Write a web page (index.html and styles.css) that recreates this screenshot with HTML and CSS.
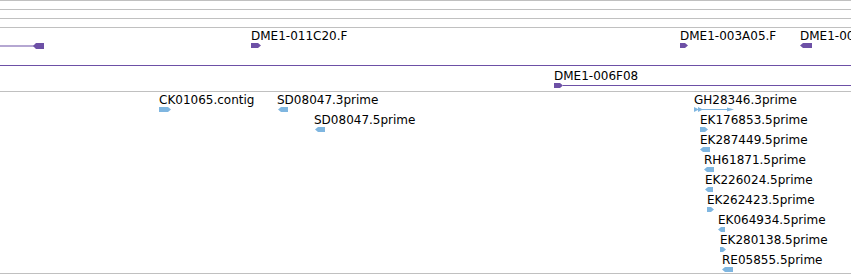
FILE: index.html
```html
<!DOCTYPE html>
<html>
<head>
<meta charset="utf-8">
<link rel="stylesheet" href="styles.css">
</head>
<body>
<div class="view">
  <div class="track thin"></div>
  <div class="track thin"></div>
  <div class="track thin"></div>
  <div class="track purple t2">
    <div class="row">
      <div class="feat" style="left:0px">
        <span class="label"></span>
        <svg class="glyph" width="44" height="6" viewBox="0 0 44 6"><rect x="0" y="2.5" width="36" height="1"/><polygon points="33,3 36,0 44,0 44,6 36,6"/></svg>
      </div>
      <div class="feat" style="left:251px">
        <span class="label">DME1-011C20.F</span>
        <svg class="glyph" width="10" height="5" viewBox="0 0 10 5"><polygon points="0,0 7,0 10,2.5 7,5 0,5"/></svg>
      </div>
      <div class="feat" style="left:680px">
        <span class="label">DME1-003A05.F</span>
        <svg class="glyph" width="8" height="5" viewBox="0 0 8 5"><polygon points="0,0 5,0 8,2.5 5,5 0,5"/></svg>
      </div>
      <div class="feat" style="left:800px">
        <span class="label">DME1-006F08.R</span>
        <svg class="glyph" width="12" height="5" viewBox="0 0 12 5"><polygon points="3,0 12,0 12,5 3,5 0,2.5"/></svg>
      </div>
    </div>
    <div class="row">
      <div class="feat full">
        <span class="label"></span>
        <svg class="glyph" width="851" height="5" viewBox="0 0 851 5"><rect x="0" y="2" width="851" height="1"/></svg>
      </div>
    </div>
    <div class="row">
      <div class="feat" style="left:554px">
        <span class="label">DME1-006F08</span>
        <svg class="glyph" width="297" height="5" viewBox="0 0 297 5"><polygon points="0,0 6,0 9,2.5 6,5 0,5"/><rect x="9" y="2" width="288" height="1"/></svg>
      </div>
    </div>
  </div>
  <div class="track blue t3">
    <div class="row">
      <div class="feat" style="left:159px">
        <span class="label">CK01065.contig</span>
        <svg class="glyph" width="12" height="5" viewBox="0 0 12 5"><polygon points="0,0 9,0 12,2.5 9,5 0,5"/></svg>
      </div>
      <div class="feat" style="left:277px">
        <span class="label">SD08047.3prime</span>
        <svg class="glyph off1" width="10" height="5" viewBox="0 0 10 5"><polygon points="3,0 10,0 10,5 3,5 0,2.5"/></svg>
      </div>
      <div class="feat" style="left:694px">
        <span class="label">GH28346.3prime</span>
        <svg class="glyph" width="40" height="5" viewBox="0 0 40 5"><polygon points="0,0 5,2.5 0,5"/><polygon points="4,0 9,2.5 4,5"/><rect x="8" y="2" width="26" height="1"/><polygon points="33,0.5 40,2.5 33,4.5"/></svg>
      </div>
    </div>
    <div class="row">
      <div class="feat" style="left:314px">
        <span class="label">SD08047.5prime</span>
        <svg class="glyph off1" width="10" height="5" viewBox="0 0 10 5"><polygon points="3,0 10,0 10,5 3,5 0,2.5"/></svg>
      </div>
      <div class="feat" style="left:700px">
        <span class="label">EK176853.5prime</span>
        <svg class="glyph" width="8" height="5" viewBox="0 0 8 5"><polygon points="0,0 5,0 8,2.5 5,5 0,5"/></svg>
      </div>
    </div>
    <div class="row">
      <div class="feat" style="left:700px">
        <span class="label">EK287449.5prime</span>
        <svg class="glyph" width="10" height="5" viewBox="0 0 10 5"><polygon points="3,0 10,0 10,5 3,5 0,2.5"/></svg>
      </div>
    </div>
    <div class="row">
      <div class="feat" style="left:704px">
        <span class="label">RH61871.5prime</span>
        <svg class="glyph" width="10" height="5" viewBox="0 0 10 5"><polygon points="3,0 10,0 10,5 3,5 0,2.5"/></svg>
      </div>
    </div>
    <div class="row">
      <div class="feat" style="left:705px">
        <span class="label">EK226024.5prime</span>
        <svg class="glyph" width="8" height="5" viewBox="0 0 8 5"><polygon points="3,0 8,0 8,5 3,5 0,2.5"/></svg>
      </div>
    </div>
    <div class="row">
      <div class="feat" style="left:707px">
        <span class="label">EK262423.5prime</span>
        <svg class="glyph" width="7" height="5" viewBox="0 0 7 5"><polygon points="0,0 4,0 7,2.5 4,5 0,5"/></svg>
      </div>
    </div>
    <div class="row">
      <div class="feat" style="left:718px">
        <span class="label">EK064934.5prime</span>
        <svg class="glyph" width="7" height="5" viewBox="0 0 7 5"><polygon points="3,0 7,0 7,5 3,5 0,2.5"/></svg>
      </div>
    </div>
    <div class="row">
      <div class="feat" style="left:720px">
        <span class="label">EK280138.5prime</span>
        <svg class="glyph" width="6" height="5" viewBox="0 0 6 5"><polygon points="0,0 3,0 6,2.5 3,5 0,5"/></svg>
      </div>
    </div>
    <div class="row">
      <div class="feat" style="left:722px">
        <span class="label">RE05855.5prime</span>
        <svg class="glyph" width="11" height="5" viewBox="0 0 11 5"><polygon points="3,0 11,0 11,5 3,5 0,2.5"/></svg>
      </div>
    </div>
  </div>
</div>
</body>
</html>
```
FILE: styles.css
```css
html, body {
  margin: 0;
  padding: 0;
  background: #ffffff;
}
.view {
  width: 851px;
  height: 275px;
  overflow: hidden;
  font-family: "DejaVu Sans", sans-serif;
  font-size: 12px;
  color: #000000;
}
.track {
  border-top: 1px solid #c0c0c0;
  display: flex;
  flex-direction: column;
}
.thin {
  height: 8px;
}
.t2 {
  height: 62px;
  padding-top: 1px;
}
.t3 {
  height: 180px;
  padding-top: 1px;
  border-bottom: 1px solid #c0c0c0;
}
.row {
  position: relative;
  height: 20px;
  flex: none;
}
.feat {
  position: absolute;
  top: 0;
  display: flex;
  flex-direction: column;
  align-items: flex-start;
  white-space: nowrap;
}
.feat.full {
  left: 0;
}
.label {
  display: block;
  height: 12px;
  padding-top: 1px;
  line-height: 13px;
}
.glyph {
  display: block;
  margin-top: 1px;
}
.off1 {
  margin-left: 1px;
}
.purple .glyph {
  fill: #6d50a6;
}
.blue .glyph {
  fill: #7fb6e0;
}
```
